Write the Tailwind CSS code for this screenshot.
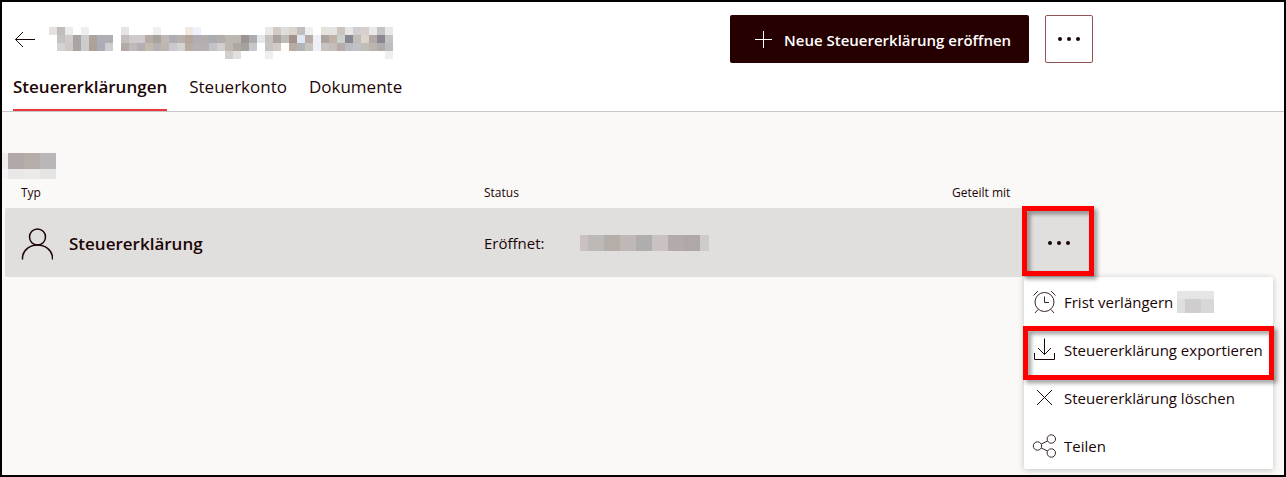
<!DOCTYPE html>
<html lang="de">
  <head>
    <meta charset="UTF-8" />
    <meta name="viewport" content="width=device-width, initial-scale=1.0" />
    <title>Steuererklärungen</title>
    <script src="https://cdn.jsdelivr.net/npm/@tailwindcss/browser@4"></script>
  </head>
  <body
    class="flex min-h-screen flex-col border-2 border-black bg-[#faf9f8] font-['Open_Sans','Noto_Sans',sans-serif] text-[15px] text-[#1c0606]"
  >
    <!-- Kopfbereich mit Titel, Aktionen und Reitern -->
    <header class="border-b border-[#c8c6c4] bg-white">
      <div class="flex max-w-[1091px] items-start justify-between pt-[13px]">
        <div class="flex items-start pl-3 pt-3">
          <a href="#" aria-label="Zurück" class="mt-0.5">
            <svg class="h-6 w-[21px]" viewBox="0 0 21 24" fill="none" stroke="#1c0606">
              <path d="M21.500 10.500H1.500M9 3L1.500 10.500L9 18" />
            </svg>
          </a>
          <h1 class="ml-3.5">
            <svg id="name" class="h-8 w-[344px]" viewBox="0 0 43 4" shape-rendering="crispEdges"></svg>
          </h1>
        </div>
        <div class="flex gap-4">
          <button
            type="button"
            class="flex h-12 w-[299px] items-center gap-3 rounded-xs bg-[#260000] pl-6 font-semibold text-white"
          >
            <svg class="h-[18px] w-[18px]" viewBox="0 0 18 18" stroke="currentColor">
              <path d="M9.5 1V18M1 9.5H18" />
            </svg>
            <span class="whitespace-nowrap pt-0.5">Neue Steuererklärung eröffnen</span>
          </button>
          <button
            type="button"
            aria-label="Weitere Aktionen"
            class="flex h-12 w-12 items-center justify-center rounded-xs border border-[#8f5555] bg-white"
          >
            <svg class="h-6 w-6" viewBox="0 0 24 24" fill="#1c0606">
              <circle cx="3" cy="12" r="2" />
              <circle cx="12" cy="12" r="2" />
              <circle cx="21" cy="12" r="2" />
            </svg>
          </button>
        </div>
      </div>
      <nav class="flex gap-[22px] pl-[11px] text-[17px]">
        <a href="#" class="flex h-12 items-center border-b-2 border-[#e8383d] pt-0.5 font-semibold">Steuererklärungen</a>
        <a href="#" class="flex h-12 items-center border-b-2 border-transparent pt-0.5">Steuerkonto</a>
        <a href="#" class="flex h-12 items-center border-b-2 border-transparent pt-0.5">Dokumente</a>
      </nav>
    </header>

    <main class="max-w-[1091px] pt-[41px]">
      <h2>
        <svg id="jahr" class="h-[26px] w-[54px]" viewBox="0 0 54 26" shape-rendering="crispEdges">
          <path fill="#f1ecea" d="M0 0h6v16H0z" />
          <path fill="#b0a9a8" d="M6 0h16v16H6z" />
          <path fill="#b6aca8" d="M22 0h16v16H22z" />
          <path fill="#bab7b8" d="M38 0h16v16H38z" />
          <path fill="#f6f4f3" d="M0 16h6v10H0z" />
          <path fill="#e9e8e8" d="M6 16h16v10H6z" />
          <path fill="#ebeae9" d="M22 16h16v10H22z" />
          <path fill="#e5e4e5" d="M38 16h16v10H38z" />
        </svg>
      </h2>
      <div class="pl-[3px]">
        <table class="w-full table-fixed text-left">
          <thead class="text-[12px]">
            <tr class="h-[29px]">
              <th class="pb-0.5 pl-4 font-normal">Typ</th>
              <th class="w-[468px] pb-0.5 font-normal">Status</th>
              <th class="w-[72px] whitespace-nowrap pb-0.5 font-normal">Geteilt mit</th>
              <th class="w-[69px]"></th>
            </tr>
          </thead>
          <tbody>
            <tr class="h-[69px] bg-[#e1dfdd]">
              <td class="rounded-l-xs pl-4">
                <div class="flex items-center gap-4 pt-0.5 text-[17px] font-semibold">
                  <svg class="h-8 w-8" viewBox="0 0 32 32" fill="none" stroke="#1c0606" stroke-width="1.5">
                    <circle cx="16.500" cy="9" r="8" />
                    <path d="M1.500 31.500V29.500C2 22 9 17 16.500 17S31 22 31.500 29.500V31.500" />
                  </svg>
                  Steuererklärung
                </div>
              </td>
              <td>
                <div class="flex items-center">
                  <span class="w-24 pt-0.5">Eröffnet:</span>
                  <svg class="h-4 w-[129px]" viewBox="0 0 129 16" shape-rendering="crispEdges">
                    <path fill="#c9c2c1" d="M0 0h8v16H0z" />
                    <path fill="#bcb9b6" d="M8 0h16v16H8z" />
                    <path fill="#b4ada8" d="M24 0h16v16H24z" />
                    <path fill="#bfb8b6" d="M40 0h16v16H40z" />
                    <path fill="#b0adaf" d="M56 0h16v16H56z" />
                    <path fill="#c9c2c1" d="M72 0h16v16H72z" />
                    <path fill="#b2aba9" d="M88 0h16v16H88z" />
                    <path fill="#afa8a6" d="M104 0h16v16H104z" />
                    <path fill="#cecbcd" d="M120 0h9v16H120z" />
                  </svg>
                </div>
              </td>
              <td></td>
              <td class="relative">
                <button
                  type="button"
                  aria-label="Optionen"
                  aria-expanded="true"
                  class="flex h-[69px] w-full items-center justify-center"
                >
                  <svg class="h-6 w-6" viewBox="0 0 24 24" fill="#1c0606">
                    <circle cx="3" cy="12" r="2" />
                    <circle cx="12" cy="12" r="2" />
                    <circle cx="21" cy="12" r="2" />
                  </svg>
                </button>

                <!-- Aufgeklapptes Menü -->
                <ul class="absolute left-0 top-full w-[249px] rounded-xs bg-white shadow-[0_1px_6px_rgba(0,0,0,0.22)]">
                  <li>
                    <button type="button" class="flex h-12 w-full items-center gap-2 pl-2 pt-0.5">
                      <svg class="h-6 w-6 shrink-0" viewBox="0 0 24 24" fill="none" stroke="#3a2727">
                        <circle cx="12.500" cy="12" r="9.500" />
                        <path d="M12.500 6.500V12.500H17" />
                        <path d="M1.500 5.500L6 1M19 1L23.500 5.500M6 19.500L3 23M19 19.500L22 23" />
                      </svg>
                      <span>Frist verlängern</span>
                      <svg class="-ml-1 h-[22px] w-[37px]" viewBox="0 0 37 22" shape-rendering="crispEdges">
                        <path fill="#e6e5e6" d="M0 0h37v8H0z" />
                        <path fill="#e0dfdf" d="M0 8h8v14H0z" />
                        <path fill="#cfcdcd" d="M8 8h16v14H8z" />
                        <path fill="#d9d8d8" d="M24 8h13v14H24z" />
                      </svg>
                    </button>
                  </li>
                  <li class="relative">
                    <button type="button" class="flex h-12 w-full items-center gap-2 whitespace-nowrap pl-2 pt-0.5">
                      <svg class="h-6 w-6 shrink-0" viewBox="0 0 24 24" fill="none" stroke="#1c0606">
                        <path d="M12.500 .5V16.500M6 10L12.500 16.500L19 10M2.500 15V21.500H22.500V15" />
                      </svg>
                      Steuererklärung exportieren
                    </button>
                    <!-- Markierung: Menüpunkt -->
                    <div class="pointer-events-none absolute -inset-x-px top-px h-[54px] border-5 border-[#ff0000] drop-shadow-[3px_3px_2px_rgba(0,0,0,0.4)]"></div>
                  </li>
                  <li>
                    <button type="button" class="flex h-12 w-full items-center gap-2 pl-2 pt-0.5">
                      <svg class="h-6 w-6 shrink-0" viewBox="0 0 24 24" fill="none" stroke="#1c0606">
                        <path d="M5 4L20 19M20 4L5 19" />
                      </svg>
                      Steuererklärung löschen
                    </button>
                  </li>
                  <li>
                    <button type="button" class="flex h-12 w-full items-center gap-2 pl-2 pt-0.5">
                      <svg class="h-6 w-6 shrink-0" viewBox="0 0 24 24" fill="none" stroke="#3a2727">
                        <circle cx="5.500" cy="12" r="4.200" />
                        <circle cx="19.300" cy="5" r="4.200" />
                        <circle cx="19.300" cy="19" r="4.200" />
                        <path d="M9.300 10L15.500 7M9.300 14L15.500 17" />
                      </svg>
                      Teilen
                    </button>
                  </li>
                </ul>
                <!-- Markierung: Schaltfläche -->
                <div class="pointer-events-none absolute -left-0.5 -right-px -top-0.5 h-[70px] border-5 border-[#ff0000] drop-shadow-[3px_3px_2px_rgba(0,0,0,0.4)]"></div>
              </td>
            </tr>
          </tbody>
        </table>
      </div>
    </main>

    <script>
      // Unkenntlich gemachter Name: je Zeile die Farben der Kacheln, "-" ist leer
      const zeilen = [
        "e5e1de c2bdbd eaecea - efedee - - - - e5e4e5 - - - eff0ef - - - efe9e1 eef2fa - - - - - - - - e9e9e7 d2cac7 dddddd dbd3ce c0bebf eff0ee - e6e3df e3e3e3 cbc3bf e6e6e6 cfcfd1 d6cfcb e9e9e7 c4c3c6 e8e8e8",
        "- c5c2c2 d0ccc9 a9a4a3 cccdce afa29d aeadb6 b1aeb2 - c3bebd cfcbcc cfcbcc b6aba7 a6a39f bfb8b4 afadb2 b7b0ad b5a59c b1adb2 b3aeae abacb0 b3adac bcb8b0 bcb8b0 9c9492 acabae e5e7e9 c5c2c0 aba29f bfbbb9 a2918a e0e6f2 b6aba5 edf1f7 aaa39f c0b2a7 ccd0cd 888690 c0bcba dcd4cd b4a9a7 8b8791 c3c3c5",
        "- d3d3d1 cec9c5 a9a5a4 cdcccd ae9f98 acacb8 cfcdd0 - b3a9a5 bfb9b8 b2afb3 c5b9b0 b5b0b1 bdb5b2 c9c9cd d4d3d0 baaca1 b4b0b4 b4b0b4 c3c2c9 d2cecd bcb8af aea8a0 a5a19f c7c8cb - c7c5c2 d0cbc7 fefef4 b8aba6 b1b3b7 c7c4c0 edf1f7 c8c3c0 c5beb8 b5abaa bcbbbf c1c0c3 c2bcb7 bdb3b0 aeacad bdbdc1",
        "- - - - - - - - - - - - - - - - - - - - - - d4cecc e0e0e2 - - - f0eff0 - - - - - - - - - - - - - - efefef",
      ];

      document.getElementById("name").innerHTML = zeilen
        .map((zeile, y) =>
          zeile
            .split(" ")
            .map((farbe, x) =>
              farbe === "-" ? "" : `<rect x="${x}" y="${y}" width="1" height="1" fill="#${farbe}" />`
            )
            .join("")
        )
        .join("");
    </script>
  </body>
</html>
